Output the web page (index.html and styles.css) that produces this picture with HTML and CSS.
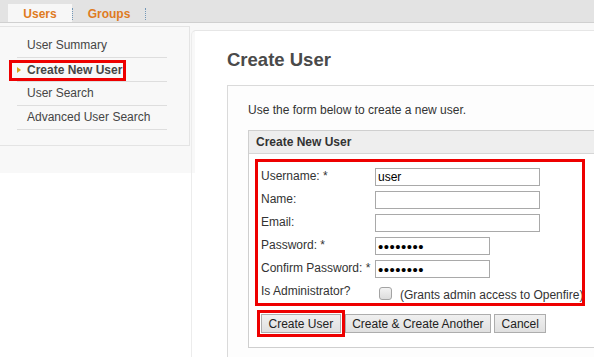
FILE: index.html
```html
<!DOCTYPE html>
<html lang="en">
<head>
    <meta charset="UTF-8">
    <title>Create User</title>
    <link rel="stylesheet" href="styles.css">
</head>
<body>
    <div class="topbar">
        <div class="tab active">Users</div><span class="tab-sep"></span>
        <div class="tab">Groups</div><span class="tab-sep"></span>
    </div>

    <div class="page">
        <div class="sidebar">
            <ul class="sidenav">
                <li>User Summary</li>
                <li class="current"><span class="mark">Create New User</span></li>
                <li>User Search</li>
                <li>Advanced User Search</li>
            </ul>
        </div>

        <div class="main">
            <div class="panel">
                <h1>Create User</h1>
                <div class="section">
                    <p class="intro">Use the form below to create a new user.</p>
                    <div class="box">
                        <div class="box-head">Create New User</div>
                        <div class="box-body">
                            <div class="fields">
                                <label>Username: *</label>
                                <div class="cell"><input type="text" value="user"></div>
                                <label>Name:</label>
                                <div class="cell"><input type="text"></div>
                                <label>Email:</label>
                                <div class="cell"><input type="text"></div>
                                <label>Password: *</label>
                                <div class="cell"><input class="pw" type="password" value="password"></div>
                                <label>Confirm Password: *</label>
                                <div class="cell"><input class="pw" type="password" value="password"></div>
                                <label>Is Administrator?</label>
                                <div class="cell admin">
                                    <input type="checkbox">
                                    <span>(Grants admin access to Openfire)</span>
                                </div>
                            </div>
                            <div class="buttons">
                                <button class="btn marked">Create User</button>
                                <button class="btn">Create &amp; Create Another</button>
                                <button class="btn">Cancel</button>
                            </div>
                        </div>
                    </div>
                </div>
            </div>
        </div>
    </div>
</body>
</html>
```

FILE: styles.css
```css
html, body {
    margin: 0;
    overflow: hidden;
    background: #fff;
    font-family: "Liberation Sans", Arial, sans-serif;
    font-size: 12px;
    color: #333;
}

/* tabs */
.topbar {
    display: flex;
    height: 22px;
    padding-left: 8px;
    background: #e3e3e3;
    border-bottom: 1px solid #d0d0d0;
}

.tab {
    box-sizing: border-box;
    margin-top: 4px;
    height: 18px;
    width: 72px;
    padding-top: 2px;
    line-height: 16px;
    text-align: center;
    font-weight: bold;
    color: #df7b1f;
}

.tab.active {
    width: 64px;
    background: #f7f7f7;
}

.tab-sep {
    margin-top: 8px;
    height: 12px;
    border-left: 1px dotted #7398b8;
}

/* layout */
.page {
    display: flex;
    height: 334px;
}

.sidebar {
    flex: 0 0 195px;
    height: 150px;
    background: #f8f8f8;
}

.sidenav {
    list-style: none;
    width: 189px;
    margin: 3px 0 0 0;
    padding: 7px 0 15px 0;
    border-top: 1px solid #e4e4e4;
    border-right: 1px solid #e4e4e4;
    border-bottom: 1px solid #e4e4e4;
}

.sidenav li {
    margin-left: 17px;
    width: 140px;
    padding-left: 10px;
    line-height: 23px;
    border-bottom: 1px solid #dedede;
    color: #454545;
    white-space: nowrap;
}

.sidenav .current {
    font-weight: bold;
}

.mark {
    display: inline-block;
    margin-left: -15px;
    padding: 1px 1px 2px 5px;
    line-height: 12px;
    vertical-align: -1px;
    outline: 3px solid #ee0000;
}

.mark::before {
    content: "";
    display: inline-block;
    margin-right: 6px;
    border-left: 4px solid #d9a21b;
    border-top: 3px solid transparent;
    border-bottom: 3px solid transparent;
    vertical-align: 1px;
}

.main {
    flex: 1;
    margin-left: -4px;
    padding-top: 7px;
    overflow: hidden;
    background: linear-gradient(#f8f8f8, #f8f8f8) top / 100% 7px no-repeat;
}

.panel {
    height: 100%;
    padding-left: 35px;
    border-top: 1px solid #e6e6e6;
    border-left: 1px solid #ececec;
    border-top-left-radius: 5px;
    background: linear-gradient(to right, transparent 3px, #fff 3px);
}

h1 {
    margin: 18px 0 0 0;
    font-size: 18.5px;
    line-height: 22px;
    color: #4a4a4a;
}

.section {
    width: 420px;
    margin-top: 14px;
    padding: 17px 0 40px 20px;
    border: 1px solid #dadada;
    background: #fdfdfd;
}

.intro {
    margin: 0 0 12px 0;
    line-height: 15px;
}

.box {
    border: 1px solid #cfcfcf;
    background: #fff;
}

.box-head {
    height: 22px;
    padding-left: 7px;
    line-height: 22px;
    font-weight: bold;
    background: #eeeeee;
    border-bottom: 1px solid #d6d6d6;
}

.box-body {
    padding: 8px 0 14px 9px;
}

/* form */
.fields {
    display: grid;
    grid-template-columns: 114px 1fr;
    grid-auto-rows: 23px;
    width: 321px;
    padding: 3px 0 0 3px;
    outline: 3px solid #ee0000;
}

.fields label {
    line-height: 23px;
    white-space: nowrap;
}

.cell {
    display: flex;
    align-items: center;
}

.cell input[type="text"],
.cell input[type="password"] {
    box-sizing: border-box;
    width: 165px;
    height: 18px;
    margin: 0;
    padding: 1px 2px 0 2px;
    border: 1px solid #a9a9a9;
    font-family: "Liberation Sans", Arial, sans-serif;
    font-size: 12px;
    color: #000;
}

.cell input.pw {
    width: 115px;
    font-size: 15px;
    letter-spacing: 0.5px;
}

.cell.admin {
    align-items: flex-start;
}

.cell.admin input {
    appearance: none;
    width: 13px;
    height: 13px;
    margin: 7px 8px 0 4px;
    border: 1px solid #a3a3a3;
    border-radius: 3px;
    background: linear-gradient(#f3f3f3, #dcdcdc);
}

.cell.admin span {
    padding-top: 4px;
    line-height: 23px;
    white-space: nowrap;
}

.buttons {
    display: flex;
    gap: 4px;
    margin: 11px 0 0 3px;
}

.btn {
    box-sizing: border-box;
    height: 19px;
    padding: 0 6.5px;
    border: 1px solid #adadad;
    border-radius: 0;
    background: linear-gradient(#f0f0f0, #e0e0e0);
    font-family: "Liberation Sans", Arial, sans-serif;
    font-size: 12px;
    line-height: 16px;
    color: #222;
}

.btn + .btn + .btn {
    margin-left: -1px;
}

.btn.marked {
    outline: 3px solid #ee0000;
    outline-offset: 1px;
}
```
